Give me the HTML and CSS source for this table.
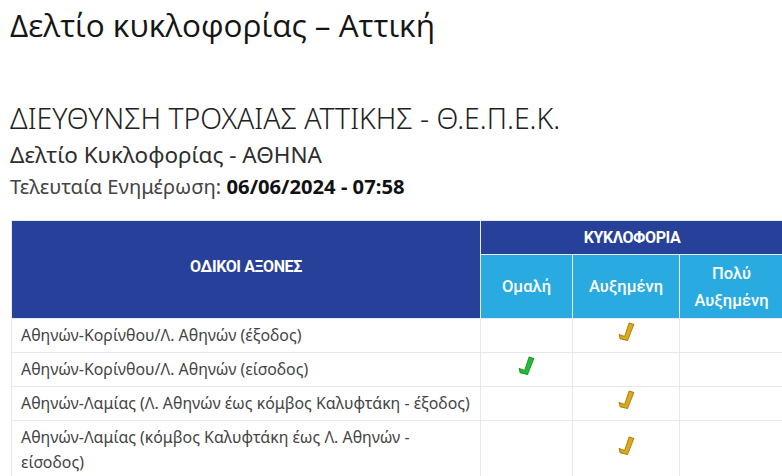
FILE: index.html
```html
<!DOCTYPE html>
<html lang="el">
<head>
<meta charset="utf-8">
<title>Δελτίο κυκλοφορίας – Αττική</title>
<link rel="stylesheet" href="styles.css">
</head>
<body>
<div class="page">
  <h1 class="title">Δελτίο κυκλοφορίας – Αττική</h1>
  <h2 class="org">ΔΙΕΥΘΥΝΣΗ ΤΡΟΧΑΙΑΣ ΑΤΤΙΚΗΣ - Θ.Ε.Π.Ε.Κ.</h2>
  <h3 class="sub">Δελτίο Κυκλοφορίας - ΑΘΗΝΑ</h3>
  <p class="updated">Τελευταία Ενημέρωση: <strong>06/06/2024 - 07:58</strong></p>

  <table class="traffic">
    <colgroup>
      <col class="col-road">
      <col class="col-c1">
      <col class="col-c2">
      <col class="col-c3">
    </colgroup>
    <thead>
      <tr>
        <th class="h-main h-roads" rowspan="2">ΟΔΙΚΟΙ ΑΞΟΝΕΣ</th>
        <th class="h-main" colspan="3">ΚΥΚΛΟΦΟΡΙΑ</th>
      </tr>
      <tr>
        <th class="h-sub">Ομαλή</th>
        <th class="h-sub">Αυξημένη</th>
        <th class="h-sub">Πολύ Αυξημένη</th>
      </tr>
    </thead>
    <tbody>
      <tr>
        <td class="road">Αθηνών-Κορίνθου/Λ. Αθηνών (έξοδος)</td>
        <td></td>
        <td class="mark"><svg class="chk gold" viewBox="0 0 16 19"><path d="M10.5 1 L15 2.3 L9 17.5 L2 15.8 L1 11.8 L5 13.2 L6.3 13.6 Z"/></svg></td>
        <td></td>
      </tr>
      <tr>
        <td class="road">Αθηνών-Κορίνθου/Λ. Αθηνών (είσοδος)</td>
        <td class="mark"><svg class="chk green" viewBox="0 0 16 19"><path d="M10.5 1 L15 2.3 L9 17.5 L2 15.8 L1 11.8 L5 13.2 L6.3 13.6 Z"/></svg></td>
        <td></td>
        <td></td>
      </tr>
      <tr>
        <td class="road">Αθηνών-Λαμίας (Λ. Αθηνών έως κόμβος Καλυφτάκη - έξοδος)</td>
        <td></td>
        <td class="mark"><svg class="chk gold" viewBox="0 0 16 19"><path d="M10.5 1 L15 2.3 L9 17.5 L2 15.8 L1 11.8 L5 13.2 L6.3 13.6 Z"/></svg></td>
        <td></td>
      </tr>
      <tr>
        <td class="road">Αθηνών-Λαμίας (κόμβος Καλυφτάκη έως Λ. Αθηνών - είσοδος)</td>
        <td></td>
        <td class="mark"><svg class="chk gold" viewBox="0 0 16 19"><path d="M10.5 1 L15 2.3 L9 17.5 L2 15.8 L1 11.8 L5 13.2 L6.3 13.6 Z"/></svg></td>
        <td></td>
      </tr>
    </tbody>
  </table>
</div>
</body>
</html>
```

FILE: styles.css
```css
html, body {
  margin: 0;
  padding: 0;
  background: #ffffff;
  overflow: hidden;
}

.page {
  padding: 0 0 0 10px;
  font-family: "Noto Sans", "Open Sans", sans-serif;
  color: #333333;
}

.title {
  margin: 0;
  padding-top: 6px;
  font-family: "Open Sans", "Noto Sans", sans-serif;
  font-weight: 400;
  font-size: 31.5px;
  line-height: 38px;
  color: #151515;
}

.org {
  margin: 57px 0 0 0;
  font-weight: 300;
  font-size: 28.4px;
  line-height: 34px;
  color: #222222;
}

.sub {
  margin: 5px 0 0 0;
  font-weight: 400;
  font-size: 22.5px;
  line-height: 30px;
  color: #2e2e2e;
}

.updated {
  margin: 3px 0 0 0;
  font-size: 20.2px;
  line-height: 26px;
  color: #444444;
}

.updated strong {
  font-weight: 700;
  color: #111111;
}

.traffic {
  margin-top: 21px;
  margin-left: 1px;
  width: 772px;
  border-collapse: collapse;
  table-layout: fixed;
}

.col-road { width: 469px; }
.col-c1 { width: 92px; }
.col-c2 { width: 107px; }
.col-c3 { width: 104px; }

.traffic th {
  color: #ffffff;
  font-family: "Roboto", "Noto Sans", sans-serif;
  text-align: center;
  border: 1px solid #e6ecf5;
}

.h-main {
  background: #27409a;
  font-weight: 700;
  font-size: 16px;
  letter-spacing: -0.4px;
  height: 33px;
  padding: 0;
}

.h-roads {
  padding-bottom: 6px;
  border-left: none;
  border-top: none;
}

.h-sub {
  background: #29abe2;
  font-weight: 500;
  font-size: 16.5px;
  line-height: 27px;
  height: 63px;
  padding: 0 4px;
}

.traffic td {
  border: 1px solid #e8e8e8;
  padding: 4px 4px 4px 9px;
  font-size: 15.9px;
  line-height: 25px;
  color: #444444;
  vertical-align: middle;
}

.traffic td.mark {
  text-align: center;
  padding: 0;
}

.chk {
  width: 17px;
  height: 20px;
  display: inline-block;
  vertical-align: middle;
  position: relative;
  top: -5px;
}

.chk.gold path {
  fill: #d9aa22;
  stroke: #b08410;
  stroke-width: 1;
  stroke-linejoin: round;
}

.chk.green path {
  fill: #2cb83c;
  stroke: #1f9a2d;
  stroke-width: 1;
  stroke-linejoin: round;
}
```
